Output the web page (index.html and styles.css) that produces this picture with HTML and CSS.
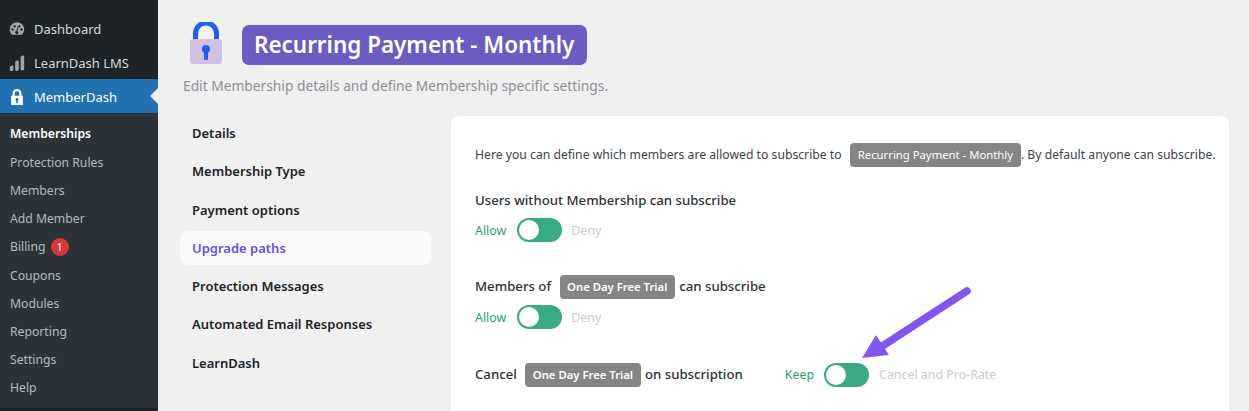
FILE: index.html
```html
<!DOCTYPE html>
<html lang="en">
<head>
  <meta charset="UTF-8">
  <title>Recurring Payment - Monthly</title>
  <link rel="stylesheet" href="styles.css">
</head>
<body>

<div class="layout">
  <!-- Admin sidebar -->
  <aside class="sidebar">
    <ul class="main-menu">
      <li>
        <svg class="menu-icon" viewBox="0 0 20 20"><path fill="#a0a5aa" fill-rule="evenodd" d="M10 2.500a8 8 0 0 0-8 8c0 2.300 1 4.400 2.500 5.800h11A8 8 0 0 0 18 10.500a8 8 0 0 0-8-8zM5 9.300a1.300 1.300 0 1 1 0 2.600 1.300 1.300 0 0 1 0-2.600zm2.400-3.600a1.300 1.300 0 1 1 0 2.600 1.300 1.300 0 0 1 0-2.600zm5.200 0a1.300 1.300 0 1 1 0 2.600 1.300 1.300 0 0 1 0-2.600zM15 9.300a1.300 1.300 0 1 1 0 2.600 1.300 1.300 0 0 1 0-2.600zM10.900 7l.6.200-.9 5.300a1.700 1.700 0 1 1-1.200-.2z"/></svg>
        Dashboard
      </li>
      <li>
        <svg class="menu-icon" viewBox="0 0 20 20"><g fill="#a0a5aa"><path d="M2 15c0-1 .6-1.700 1.500-2l1-.3c.8-.2 1.500.3 1.500 1.200V17c0 1-.7 1.700-1.500 1.800l-1 .2C2.700 19.100 2 18.600 2 17.700z"/><path d="M8 9.500c0-1 .6-1.600 1.500-1.900l1-.3c.8-.2 1.500.3 1.500 1.200V17c0 .9-.7 1.500-1.500 1.600l-1 .2C8.700 18.900 8 18.400 8 17.500z"/><path d="M14 4c0-1 .6-1.600 1.500-1.900l1-.3c.8-.2 1.500.3 1.500 1.200V16.500c0 .9-.7 1.500-1.500 1.600l-1 .2c-.8.1-1.500-.4-1.500-1.300z"/></g></svg>
        LearnDash LMS
      </li>
      <li class="current">
        <svg class="menu-icon" viewBox="0 0 20 20"><path fill="#fff" fill-rule="evenodd" d="M10 1a5 5 0 0 0-5 5v2.500H3.500V19h13V8.500H15V6a5 5 0 0 0-5-5zm0 2.500A2.500 2.500 0 0 1 12.500 6v2.500h-5V6A2.500 2.500 0 0 1 10 3.500zM10 11a1.800 1.800 0 0 1 .9 3.300V17H9.100v-2.700A1.800 1.800 0 0 1 10 11z"/></svg>
        MemberDash
      </li>
    </ul>
    <ul class="sub-menu">
      <li class="active">Memberships</li>
      <li>Protection Rules</li>
      <li>Members</li>
      <li>Add Member</li>
      <li>Billing <span class="count">1</span></li>
      <li>Coupons</li>
      <li>Modules</li>
      <li>Reporting</li>
      <li>Settings</li>
      <li>Help</li>
    </ul>
  </aside>

  <main class="content">
    <div class="page-head">
      <svg class="lock" viewBox="0 0 32 43">
        <path d="M5.500 19V11.500a10.500 10.500 0 0 1 21 0V19" fill="none" stroke="#1f5ff0" stroke-width="5"/>
        <rect x="0" y="17" width="32" height="25" rx="3" fill="#d3bfe4"/>
        <circle cx="16" cy="27" r="4" fill="#1f5ff0"/>
        <rect x="14" y="27" width="4" height="11" rx="1" fill="#1f5ff0"/>
      </svg>
      <h1>Recurring Payment - Monthly</h1>
    </div>
    <p class="subtitle">Edit Membership details and define Membership specific settings.</p>

    <div class="columns">
      <ul class="tabs">
        <li>Details</li>
        <li>Membership Type</li>
        <li>Payment options</li>
        <li class="active">Upgrade paths</li>
        <li>Protection Messages</li>
        <li>Automated Email Responses</li>
        <li>LearnDash</li>
      </ul>

      <section class="card">
        <p class="intro">Here you can define which members are allowed to subscribe to <span class="tag">Recurring Payment - Monthly</span>. By default anyone can subscribe.</p>

        <div class="setting">
          <div class="setting-title">Users without Membership can subscribe</div>
          <div class="switch-row">
            <span class="on-label">Allow</span><span class="switch"></span><span class="off-label">Deny</span>
          </div>
        </div>

        <div class="setting">
          <div class="setting-title">Members of <span class="tag tag-big">One Day Free Trial</span> can subscribe</div>
          <div class="switch-row">
            <span class="on-label">Allow</span><span class="switch"></span><span class="off-label">Deny</span>
          </div>
        </div>

        <div class="setting setting-inline">
          <div class="setting-title">Cancel <span class="tag tag-big">One Day Free Trial</span> on subscription</div>
          <div class="switch-row">
            <span class="on-label">Keep</span><span class="switch"></span><span class="off-label">Cancel and Pro-Rate</span>
          </div>
        </div>
      </section>
    </div>
  </main>
</div>

<!-- annotation arrow on top of the screenshot -->
<svg class="arrow" viewBox="0 0 120 80">
  <path d="M105 5 L22 59" fill="none" stroke="#8257f0" stroke-width="7.500" stroke-linecap="round"/>
  <path d="M0 72 L14 49 L27 69 Z" fill="#8257f0"/>
</svg>

</body>
</html>
```

FILE: styles.css
```css
html, body {
  margin: 0;
  padding: 0;
  height: 411px;
  overflow: hidden;
}

body {
  font-family: "Noto Sans", "Open Sans", sans-serif;
  background: #f0f0f1;
  color: #2c3338;
  position: relative;
}

ul {
  list-style: none;
  margin: 0;
  padding: 0;
}

.layout {
  display: flex;
  height: 411px;
}

/* sidebar */
.sidebar {
  width: 158px;
  flex-shrink: 0;
  background: #1d2327;
  padding-top: 11px;
  box-sizing: border-box;
}

.main-menu li {
  display: flex;
  align-items: center;
  gap: 8px;
  height: 34px;
  padding: 1px 0 0 8px;
  box-sizing: border-box;
  font-size: 13px;
  color: #d6d8da;
  position: relative;
}

.menu-icon {
  width: 18px;
  height: 18px;
}

.main-menu li.current {
  background: #2271b1;
  color: #fff;
}

.main-menu li.current::after {
  content: "";
  position: absolute;
  right: 0;
  top: 9px;
  border: 8px solid transparent;
  border-right-color: #f0f0f1;
  border-left: 0;
}

.sub-menu {
  background: #2c3338;
  height: 295px;
  padding-top: 6px;
  box-sizing: border-box;
}

.sub-menu li {
  display: flex;
  align-items: center;
  gap: 5px;
  height: 28.200px;
  padding-left: 10px;
  font-size: 12.200px;
  color: #b4b9be;
}

.sub-menu li.active {
  height: 29.200px;
  color: #fff;
  font-weight: 600;
}

.count {
  width: 18px;
  height: 18px;
  border-radius: 50%;
  background: #d63638;
  color: #fff;
  font-size: 11px;
  text-align: center;
  line-height: 18px;
}

/* main */
.content {
  flex: 1;
  padding: 22px 20px 0 25px;
  min-width: 0;
}

.page-head {
  display: flex;
  align-items: flex-end;
  gap: 20px;
  padding-left: 7px;
}

.lock {
  width: 32px;
  height: 43px;
}

h1 {
  margin: 0;
  padding: 0 13px 0 12px;
  height: 40px;
  line-height: 39px;
  font-size: 22.450px;
  font-weight: 600;
  color: #fff;
  background: #6b5bc3;
  border-radius: 7px;
}

.subtitle {
  margin: 11px 0 0;
  font-size: 13.770px;
  line-height: 20px;
  color: #8c8f94;
}

.columns {
  display: flex;
  gap: 20px;
  margin-top: 20px;
}

.tabs {
  width: 251px;
  flex-shrink: 0;
  margin-left: -3px;
}

.tabs li {
  height: 34px;
  line-height: 35px;
  margin-bottom: 4.300px;
  padding-left: 12px;
  font-size: 13px;
  font-weight: 600;
  color: #1d2327;
  border-radius: 8px;
}

.tabs li.active {
  color: #6a4be8;
  background: #f9fafb;
}

.card {
  width: 778px;
  height: 295px;
  padding: 27px 14px 0 24px;
  background: #fff;
  border-radius: 8px 8px 0 0;
  box-sizing: border-box;
}

.intro {
  margin: 0;
  font-size: 12.200px;
  line-height: 24px;
  color: #3c434a;
  white-space: nowrap;
}

.tag {
  display: inline-block;
  margin-left: 5px;
  padding: 0 8px;
  height: 24px;
  line-height: 24px;
  font-size: 11.300px;
  color: #fff;
  background: #858585;
  border-radius: 4px;
}

.tag-big {
  font-weight: 600;
  padding: 0 7.500px;
  margin: 0 1px 0 5px;
}

.setting {
  margin-top: 21px;
}

.setting + .setting {
  margin-top: 32px;
}

.setting + .setting-inline {
  margin-top: 33px;
}

.setting-title {
  font-size: 13.200px;
  font-weight: 500;
  line-height: 24px;
  color: #2c3338;
}

.switch-row {
  display: flex;
  align-items: center;
  gap: 10px;
  margin-top: 6px;
  font-size: 12.400px;
}

.on-label {
  color: #1f9d73;
  margin-right: 1px;
}

.off-label {
  color: #c9cbcd;
  margin-left: -1px;
}

.switch {
  width: 45px;
  height: 24px;
  border-radius: 12px;
  background: #38aa85;
  position: relative;
}

.switch::before {
  content: "";
  position: absolute;
  left: 2px;
  top: 2px;
  width: 20px;
  height: 20px;
  border-radius: 50%;
  background: #fff;
}

.setting-inline {
  display: flex;
  align-items: center;
  gap: 42px;
}

.setting-inline .switch-row {
  margin-top: 0;
}

.setting-inline .on-label,
.setting-inline .off-label {
  margin: 0;
}

.arrow {
  position: absolute;
  left: 862px;
  top: 286px;
  width: 120px;
  height: 80px;
}
```
